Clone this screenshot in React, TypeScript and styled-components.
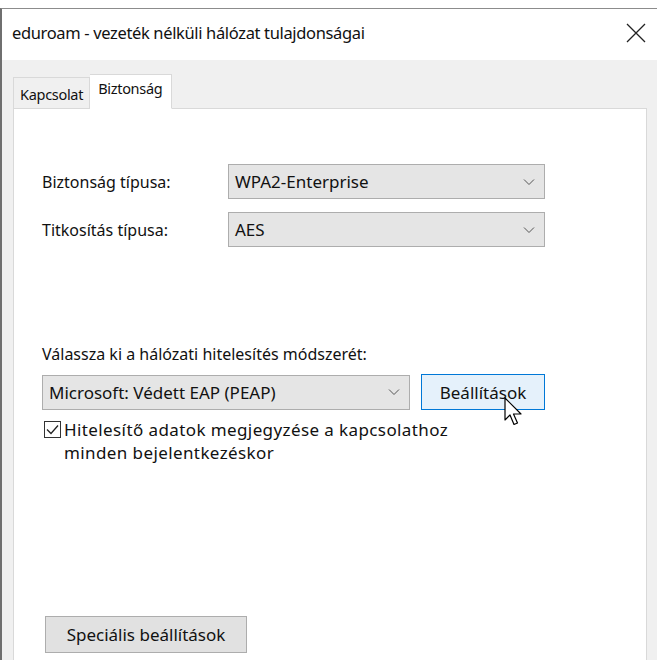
import React from "react";
import styled, { createGlobalStyle } from "styled-components";

const Global = createGlobalStyle`
  html, body { margin: 0; padding: 0; background: #ffffff; }
  body { font-family: "Noto Sans", "Open Sans", sans-serif; color: #000; }
  #root { width: 657px; height: 660px; overflow: hidden; }
`;

const Page = styled.div`
  width: 657px;
  height: 660px;
  padding-top: 8px;
  box-sizing: border-box;
  background: #ffffff;
`;

const Window = styled.div`
  height: 652px;
  border-top: 1px solid #8c8c8c;
  border-left: 2px solid #6f6f6f;
  background: #f0f0f0;
  display: flex;
  flex-direction: column;
  box-sizing: border-box;
`;

const TitleBar = styled.div`
  height: 51px;
  background: #ffffff;
  display: flex;
  align-items: center;
  justify-content: space-between;
  padding: 0 11px 4px 10px;
  box-sizing: border-box;
`;

const Title = styled.span`
  font-size: 16.5px;
  letter-spacing: -0.35px;
  color: #111;
`;

const CloseIcon = styled.svg`
  width: 20px;
  height: 20px;
  display: block;
`;

const TabStrip = styled.div`
  height: 48px;
  display: flex;
  align-items: flex-end;
  padding-left: 11px;
  position: relative;
  z-index: 1;
`;

const Tab = styled.div<{ $active?: boolean }>`
  box-sizing: border-box;
  height: ${(p) => (p.$active ? "35px" : "31px")};
  margin-bottom: ${(p) => (p.$active ? "-1px" : "0")};
  background: ${(p) => (p.$active ? "#ffffff" : "#f0f0f0")};
  border: 1px solid #d9d9d9;
  border-bottom: ${(p) => (p.$active ? "1px solid #ffffff" : "none")};
  ${(p) => (p.$active ? "border-left: none;" : "")}
  padding: ${(p) => (p.$active ? "3px 9px 0 8px" : "6px 6px 0 6px")};
  font-size: 14.5px;
  letter-spacing: -0.3px;
  color: #111;
  line-height: 20px;
`;

const Panel = styled.div`
  flex: 1;
  margin: 0 10px 0 11px;
  background: #ffffff;
  border: 1px solid #d9d9d9;
  border-bottom: none;
  padding: 55px 0 0 28px;
  display: flex;
  flex-direction: column;
  box-sizing: border-box;
`;

const FieldGrid = styled.div`
  display: grid;
  grid-template-columns: 186px 317px;
  row-gap: 13px;
  align-items: center;
`;

const Label = styled.span`
  font-size: 16px;
  color: #111;
`;

const Select = styled.div<{ $w?: number }>`
  box-sizing: border-box;
  height: 35px;
  ${(p) => (p.$w ? `width: ${p.$w}px;` : "")}
  background: #e5e5e5;
  border: 1px solid #adadad;
  display: flex;
  align-items: center;
  justify-content: space-between;
  padding: 0 9px 0 6px;
  font-size: 17px;
  color: #111;
`;

const Chevron = styled.svg`
  width: 12px;
  height: 8px;
  display: block;
`;

const MethodLabel = styled(Label)`
  margin-top: 97px;
  margin-bottom: 10px;
  line-height: 20px;
`;

const MethodRow = styled.div`
  display: flex;
  gap: 11px;
  align-items: center;
`;

const Button = styled.div<{ $focused?: boolean }>`
  box-sizing: border-box;
  height: ${(p) => (p.$focused ? "36px" : "37px")};
  width: ${(p) => (p.$focused ? "124px" : "202px")};
  background: ${(p) => (p.$focused ? "#e5f1fb" : "#e1e1e1")};
  border: 1px solid ${(p) => (p.$focused ? "#0078d7" : "#adadad")};
  display: flex;
  align-items: center;
  justify-content: center;
  font-size: 17px;
  color: #111;
  position: relative;
`;

const CheckRow = styled.label`
  display: flex;
  align-items: flex-start;
  gap: 3px;
  margin-top: 8px;
  margin-left: 2px;
`;

const CheckBox = styled.span`
  box-sizing: border-box;
  width: 17px;
  height: 17px;
  margin-top: 3px;
  border: 1px solid #333;
  background: #fff;
  display: flex;
  align-items: center;
  justify-content: center;
  flex-shrink: 0;
`;

const CheckText = styled.span`
  font-size: 17px;
  letter-spacing: 0.4px;
  line-height: 23px;
  color: #111;
`;

const Spacer = styled.div`
  flex: 1;
`;

const BottomArea = styled.div`
  padding: 0 0 7px 3px;
`;

const Cursor = styled.svg`
  position: absolute;
  left: 82px;
  top: 22px;
  width: 20px;
  height: 30px;
  pointer-events: none;
`;

export default function App() {
  return (
    <>
      <Global />
      <Page>
        <Window>
          <TitleBar>
            <Title>eduroam - vezeték nélküli hálózat tulajdonságai</Title>
            <CloseIcon viewBox="0 0 20 20">
              <path d="M1 1 L19 19 M19 1 L1 19" stroke="#222" strokeWidth="1.3" fill="none" />
            </CloseIcon>
          </TitleBar>
          <TabStrip>
            <Tab>Kapcsolat</Tab>
            <Tab $active>Biztonság</Tab>
          </TabStrip>
          <Panel>
            <FieldGrid>
              <Label>Biztonság típusa:</Label>
              <Select>
                <span>WPA2-Enterprise</span>
                <Chevron viewBox="0 0 12 8">
                  <path d="M1 1.5 L6 6.5 L11 1.5" stroke="#555" strokeWidth="1" fill="none" />
                </Chevron>
              </Select>
              <Label>Titkosítás típusa:</Label>
              <Select>
                <span>AES</span>
                <Chevron viewBox="0 0 12 8">
                  <path d="M1 1.5 L6 6.5 L11 1.5" stroke="#555" strokeWidth="1" fill="none" />
                </Chevron>
              </Select>
            </FieldGrid>
            <MethodLabel>Válassza ki a hálózati hitelesítés módszerét:</MethodLabel>
            <MethodRow>
              <Select $w={368}>
                <span>Microsoft: Védett EAP (PEAP)</span>
                <Chevron viewBox="0 0 12 8">
                  <path d="M1 1.5 L6 6.5 L11 1.5" stroke="#555" strokeWidth="1" fill="none" />
                </Chevron>
              </Select>
              <Button $focused>
                Beállítások
                <Cursor viewBox="0 0 20 30">
                  <path
                    d="M1 1 L1 23 L6 18 L10 27.5 L13.5 26 L9.5 17 L17 17 Z"
                    fill="#ffffff"
                    stroke="#000"
                    strokeWidth="1.2"
                    strokeLinejoin="round"
                  />
                </Cursor>
              </Button>
            </MethodRow>
            <CheckRow>
              <CheckBox>
                <svg width="13" height="11" viewBox="0 0 13 11">
                  <path d="M1 5.5 L5 9.5 L12 1.5" stroke="#222" strokeWidth="1.3" fill="none" />
                </svg>
              </CheckBox>
              <CheckText>
                Hitelesítő adatok megjegyzése a kapcsolathoz
                <br />
                minden bejelentkezéskor
              </CheckText>
            </CheckRow>
            <Spacer />
            <BottomArea>
              <Button>Speciális beállítások</Button>
            </BottomArea>
          </Panel>
        </Window>
      </Page>
    </>
  );
}
